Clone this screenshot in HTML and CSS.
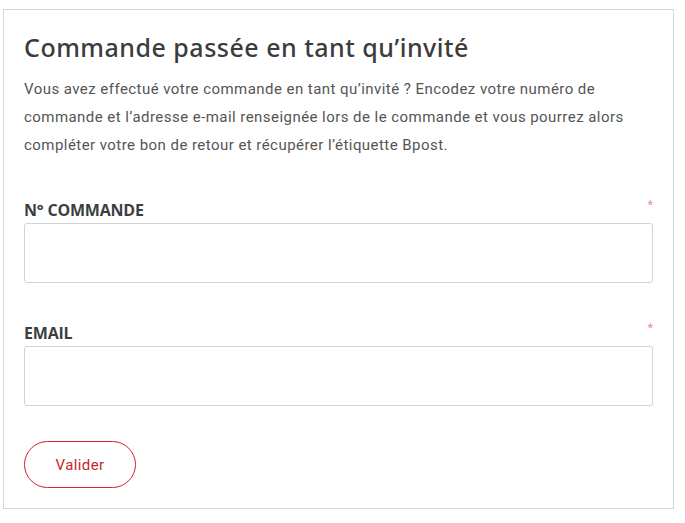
FILE: index.html
```html
<!DOCTYPE html>
<html lang="fr">
<head>
<meta charset="utf-8">
<link rel="stylesheet" href="styles.css">
</head>
<body>
<div class="card">
  <h1 class="title">Commande passée en tant qu’invité</h1>
  <p class="intro">Vous avez effectué votre commande en tant qu’invité ? Encodez votre numéro de commande et l’adresse e-mail renseignée lors de le commande et vous pourrez alors compléter votre bon de retour et récupérer l’étiquette Bpost.</p>
  <form class="form">
    <div class="field">
      <div class="label-row"><label class="label">N° COMMANDE</label><span class="req">*</span></div>
      <input class="input" type="text">
    </div>
    <div class="field">
      <div class="label-row"><label class="label">EMAIL</label><span class="req">*</span></div>
      <input class="input" type="email">
    </div>
    <div class="actions">
      <button type="button" class="btn">Valider</button>
    </div>
  </form>
</div>
</body>
</html>
```
FILE: styles.css
```css
html, body { margin: 0; padding: 0; background: #fff; }
body { font-family: Roboto, "Liberation Sans", sans-serif; }
.card {
  margin: 9px 11px 0 3px;
  border: 1px solid #d6d6d6;
  padding: 20px 20px 20px 20px;
  height: 458px;
  box-sizing: content-box;
}
.title {
  margin: 0;
  font-family: "Noto Sans", "Liberation Sans", sans-serif;
  font-weight: 500;
  font-size: 25px;
  line-height: 34px;
  color: #3c3c3c;
  letter-spacing: 0.5px;
}
.intro {
  margin: 11px 0 0;
  font-size: 15px;
  line-height: 28px;
  letter-spacing: 0.45px;
  color: #555;
}
.form { margin-top: 32px; }
.field { margin-bottom: 31px; }
.label-row { display: flex; justify-content: space-between; align-items: flex-start; height: 32px; }
.label {
  font-family: "Open Sans", "Liberation Sans", sans-serif;
  font-weight: 700;
  font-size: 16px;
  line-height: 18px;
  margin-top: 10px;
  color: #3b3f43;
  letter-spacing: -0.2px;
}
.req { color: #f08a8a; font-size: 12px; line-height: 12px; margin-top: 8px; }
.input {
  display: block;
  width: 100%;
  box-sizing: border-box;
  height: 60px;
  border: 1px solid #d3d3d3;
  border-radius: 3px;
  background: #fff;
  margin: 0;
}
.actions { padding-top: 4px; }
.btn {
  width: 112px;
  height: 47px;
  border: 1px solid #d2222f;
  border-radius: 24px;
  background: #fff;
  color: #c8262e;
  font-family: Roboto, "Liberation Sans", sans-serif;
  font-size: 15px;
  letter-spacing: 0.4px;
  cursor: pointer;
  padding: 0;
}
```
